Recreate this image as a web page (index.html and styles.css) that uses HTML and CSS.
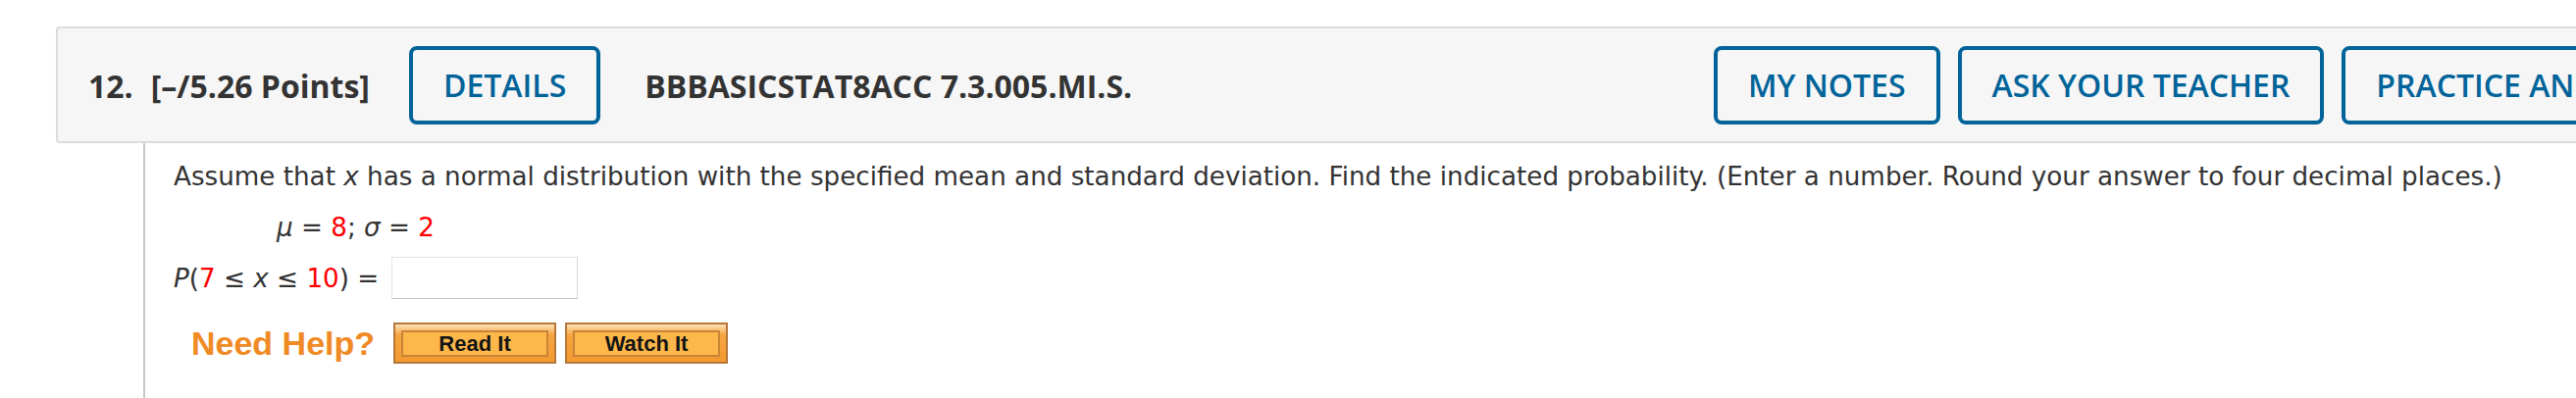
FILE: index.html
```html
<!DOCTYPE html>
<html lang="en">
<head>
<meta charset="utf-8">
<title>Question 12</title>
<link rel="stylesheet" href="styles.css">
</head>
<body>
<div class="page">
  <div class="qhead">
    <div class="qhead-left">
      <span class="qnum">12.</span>
      <span class="qpts">[–/5.26 Points]</span>
      <button class="qbtn">DETAILS</button>
      <span class="qid">BBBASICSTAT8ACC 7.3.005.MI.S.</span>
    </div>
    <div class="qhead-right">
      <button class="qbtn">MY NOTES</button>
      <button class="qbtn">ASK YOUR TEACHER</button>
      <button class="qbtn">PRACTICE ANOTHER</button>
    </div>
  </div>
  <div class="qbody">
    <p class="prompt">Assume that <i>x</i> has a normal distribution with the specified mean and standard deviation. Find the indicated probability. (Enter a number. Round your answer to four decimal places.)</p>
    <div class="given"><i>μ</i> = <span class="red">8</span>; <i>σ</i> = <span class="red">2</span></div>
    <div class="answer-row">
      <span class="expr"><i>P</i>(<span class="red">7</span> ≤ <i>x</i> ≤ <span class="red">10</span>) =</span>
      <span class="answer-box"></span>
    </div>
    <div class="help-row">
      <span class="need-help">Need Help?</span>
      <span class="help-btn"><span class="help-btn-inner">Read It</span></span>
      <span class="help-btn"><span class="help-btn-inner">Watch It</span></span>
    </div>
  </div>
</div>
</body>
</html>
```
FILE: styles.css
```css
html, body {
  margin: 0;
  padding: 0;
  background: #ffffff;
  overflow: hidden;
}
.page {
  width: 2800px;
  padding: 27px 0 0 57px;
  box-sizing: border-box;
}
.qhead {
  display: flex;
  align-items: center;
  border: 2px solid #dcdcdc;
  border-radius: 4px;
  background: #f6f6f6;
  padding: 18px 30px 17px 31px;
  font-family: "Open Sans", "Liberation Sans", sans-serif;
  color: #333333;
}
.qhead-left {
  flex: 0 0 1657px;
  display: flex;
  align-items: center;
}
.qnum {
  font-weight: 700;
  font-size: 32px;
  margin-right: 18px;
}
.qpts {
  font-weight: 700;
  font-size: 32px;
  margin-right: 40px;
}
.qid {
  font-weight: 700;
  font-size: 32px;
  margin-left: 45px;
}
.qhead-right {
  display: flex;
  gap: 18px;
  white-space: nowrap;
}
.qbtn {
  font-family: "Open Sans", "Liberation Sans", sans-serif;
  font-weight: 600;
  font-size: 32px;
  line-height: 40px;
  padding: 16px 31px;
  border: 4px solid #006399;
  border-radius: 8px;
  color: #006399;
  background: transparent;
  white-space: nowrap;
}
.qbody {
  margin-left: 89px;
  border-left: 2px solid #c8c8c8;
  padding: 16px 0 40px 29px;
  font-family: "DejaVu Sans", Verdana, sans-serif;
  font-size: 26.2px;
  line-height: 36px;
  color: #333333;
}
.prompt {
  margin: 0;
  white-space: nowrap;
}
.red {
  color: #ff0000;
}
.given {
  margin-top: 16px;
  padding-left: 105px;
}
.answer-row {
  display: flex;
  align-items: center;
  margin-top: 12px;
}
.answer-box {
  width: 190px;
  height: 43px;
  box-sizing: border-box;
  margin-left: 13px;
  background: #ffffff;
  border: 1px solid #e2e2e2;
  border-right-color: #d2d2d2;
  border-bottom-color: #c4c4c4;
}
.help-row {
  display: flex;
  align-items: center;
  margin-top: 24px;
  padding-left: 18px;
}
.need-help {
  font-family: "Liberation Sans", Arial, sans-serif;
  font-weight: 700;
  font-size: 34px;
  line-height: 40px;
  color: #f08a24;
  margin-right: 19px;
}
.help-btn {
  width: 166px;
  height: 42px;
  box-sizing: border-box;
  border: 2px solid #b5773a;
  background: linear-gradient(to bottom, #fde2b8 0%, #f7a540 28%, #f39a30 100%);
  padding: 6px 6px 5px 6px;
  margin-right: 9px;
}
.help-btn-inner {
  display: flex;
  align-items: center;
  justify-content: center;
  height: 100%;
  box-sizing: border-box;
  border: 2px solid #c98537;
  background: #fdb74b;
  font-family: "Liberation Sans", Arial, sans-serif;
  font-weight: 700;
  font-size: 22px;
  color: #141414;
}
```
